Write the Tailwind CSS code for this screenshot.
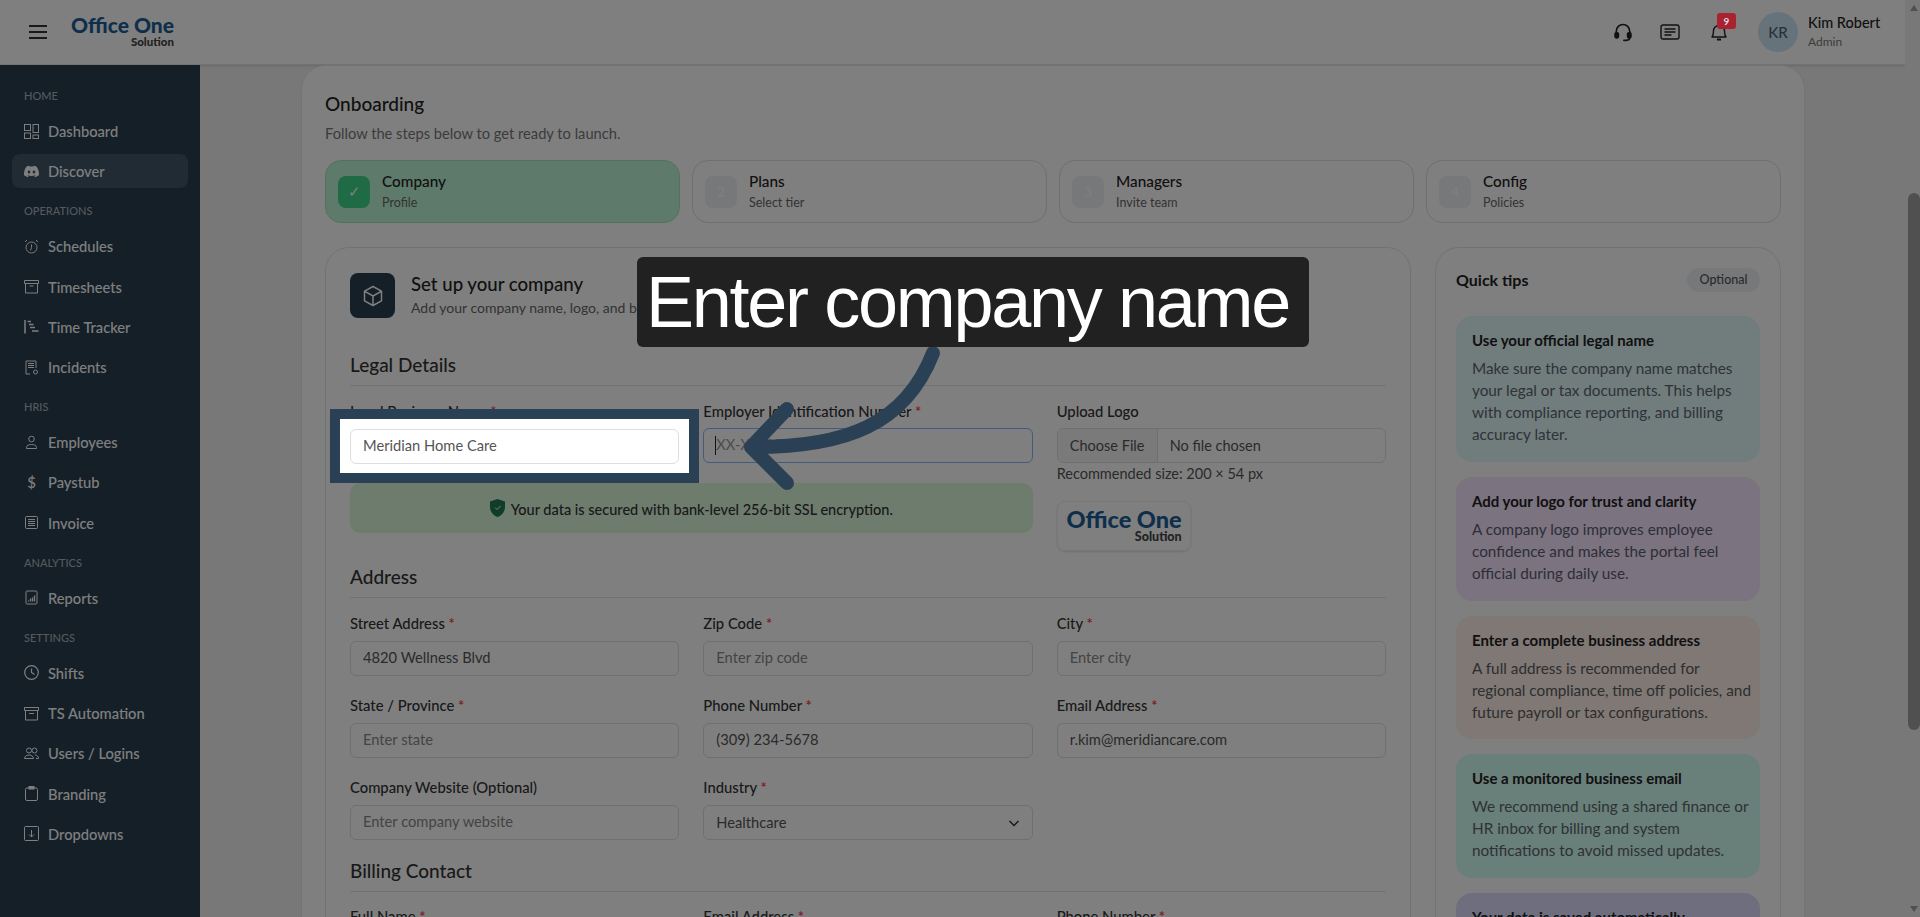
<!DOCTYPE html>
<html lang="en">
<head>
    <meta charset="UTF-8">
    <title>Onboarding - Office One</title>
    <script src="https://cdn.jsdelivr.net/npm/@tailwindcss/browser@4"></script>
</head>
<body class="h-screen overflow-hidden bg-[#f0f0f0] font-['Lato',sans-serif] text-[#333]">
<div class="flex h-screen">
    <div class="flex flex-col w-[1905px]">
        <!-- top bar -->
        <header class="h-[65px] shrink-0 bg-white border-b border-[#e4e4e4] shadow-sm flex items-center">
            <button class="ml-[29px] w-[18px] flex flex-col gap-[4.5px]">
                <span class="h-[1.5px] bg-[#333]"></span>
                <span class="h-[1.5px] bg-[#333]"></span>
                <span class="h-[1.5px] bg-[#333]"></span>
            </button>
            <div class="ml-[23px] w-[104px] mb-[3px] flex flex-col items-end leading-none">
                <span class="text-[21px] font-black text-[#1a5f96] leading-[21px] whitespace-nowrap">Office One</span>
                <span class="mt-[2px] text-[11.500px] font-black text-[#444] leading-[10px]">Solution</span>
            </div>
            <div class="ml-auto flex items-center">
                <svg class="w-[20px] h-[20px] mr-[27px]" viewBox="0 0 24 24" fill="none" stroke="#222" stroke-width="2"><path d="M4 14v-3a8 8 0 0 1 16 0v3"/><rect x="2.5" y="13" width="4" height="6" rx="1.5" fill="#222"/><rect x="17.5" y="13" width="4" height="6" rx="1.5" fill="#222"/><path d="M20 19c0 2-2 3-4 3h-3" stroke-linecap="round"/></svg>
                <svg class="w-[20px] h-[17px] mr-[30px]" viewBox="0 0 20 17" fill="none" stroke="#222" stroke-width="1.4"><rect x="1" y="1" width="18" height="14" rx="2"/><path d="M4.5 5h11M4.5 8h11M4.5 11h7"/></svg>
                <div class="relative w-[18px] h-[20px] mr-[30px]">
                    <svg class="w-[18px] h-[20px]" viewBox="0 0 18 20" fill="none" stroke="#222" stroke-width="1.4"><path d="M2 15c1.2-1.4 1.5-2.4 1.5-6a5.500 5.500 0 0 1 11 0c0 3.600.3 4.600 1.500 6z" stroke-linejoin="round"/><path d="M7 17.500h4" stroke-width="2"/></svg>
                    <span class="absolute z-50 left-[7px] top-[-9px] w-[19px] h-[16px] rounded-[3px] bg-[#a8222f] text-[10px] font-bold leading-[16px] text-center text-[#ddd]">9</span>
                </div>
                <div class="w-[40px] h-[40px] rounded-full bg-[#cfe6f7] flex items-center justify-center text-[15px] font-medium text-[#4a6478]">KR</div>
                <div class="ml-[10px] mr-[25px] w-[72px]">
                    <div class="text-[14.5px] font-medium leading-[18px] text-[#222] whitespace-nowrap">Kim Robert</div>
                    <div class="text-[12px] leading-[16px] text-[#777] mt-[2px]">Admin</div>
                </div>
            </div>
        </header>

        <div class="flex flex-1 min-h-0">
            <!-- sidebar -->
            <aside class="w-[200px] shrink-0 bg-[#283e50] pt-[8px] px-[12px] text-white text-[14.700px] font-medium">
                <div class="h-4 mt-[15px] mb-[10px] pl-[12px] text-[11px] leading-4 text-[#a8b2ba]">HOME</div>
                <a class="h-[34.200px] mb-[6px] flex items-center gap-[9px] pl-[12px]"><svg class="w-[15px] h-[15px]" viewBox="0 0 15 15" fill="none" stroke="currentColor"><rect x=".5" y=".5" width="6" height="6"/><rect x="9" y=".5" width="5.500" height="8"/><rect x=".5" y="9" width="6" height="5.500"/><rect x="9" y="11" width="5.500" height="3.500"/></svg>Dashboard</a>
                <a class="h-[34.200px] mb-[6px] flex items-center gap-[9px] pl-[12px] rounded-lg bg-[#405666]"><svg class="w-[15px] h-[15px]" viewBox="0 0 16 16" fill="currentColor"><path d="M13.545 2.907a13.2 13.2 0 0 0-3.257-1.011.05.05 0 0 0-.052.025c-.141.25-.297.577-.406.833a12.2 12.2 0 0 0-3.658 0 8 8 0 0 0-.412-.833.05.05 0 0 0-.052-.025c-1.125.194-2.22.534-3.257 1.011a.04.04 0 0 0-.021.018C.356 6.024-.213 9.047.066 12.032q.003.022.021.037a13.3 13.3 0 0 0 3.995 2.02.05.05 0 0 0 .056-.019q.463-.63.818-1.329a.05.05 0 0 0-.01-.059l-.018-.011a9 9 0 0 1-1.248-.595.05.05 0 0 1-.02-.066l.015-.019q.127-.095.248-.195a.05.05 0 0 1 .051-.007c2.619 1.196 5.454 1.196 8.041 0a.05.05 0 0 1 .053.007q.121.1.248.195a.05.05 0 0 1-.004.085 8 8 0 0 1-1.249.594.05.05 0 0 0-.03.03.05.05 0 0 0 .003.041c.24.465.515.909.817 1.329a.05.05 0 0 0 .056.019 13.2 13.2 0 0 0 4.001-2.02.05.05 0 0 0 .021-.037c.334-3.451-.559-6.449-2.366-9.106a.03.03 0 0 0-.02-.019m-8.198 7.307c-.789 0-1.438-.724-1.438-1.612s.637-1.613 1.438-1.613c.807 0 1.45.73 1.438 1.613 0 .888-.637 1.612-1.438 1.612m5.316 0c-.788 0-1.438-.724-1.438-1.612s.637-1.613 1.438-1.613c.807 0 1.451.73 1.438 1.613 0 .888-.631 1.612-1.438 1.612"/></svg>Discover</a>
                <div class="h-4 mt-[15px] mb-[10px] pl-[12px] text-[11px] leading-4 text-[#a8b2ba]">OPERATIONS</div>
                <a class="h-[34.200px] mb-[6px] flex items-center gap-[9px] pl-[12px]"><svg class="w-[15px] h-[15px]" viewBox="0 0 15 15" fill="none" stroke="currentColor"><circle cx="7.500" cy="8.500" r="5.500"/><path d="M7.500 5.500v3l-1 3M1 3l2-2M14 3l-2-2"/></svg>Schedules</a>
                <a class="h-[34.200px] mb-[6px] flex items-center gap-[9px] pl-[12px]"><svg class="w-[15px] h-[15px]" viewBox="0 0 15 15" fill="none" stroke="currentColor"><path d="M.5 1.500h14v3h-14zM1.500 4.500v9.500h12V4.500M5.500 7h4"/></svg>Timesheets</a>
                <a class="h-[34.200px] mb-[6px] flex items-center gap-[9px] pl-[12px]"><svg class="w-[15px] h-[15px]" viewBox="0 0 15 15" fill="none" stroke="currentColor"><path d="M1 1v13.500M3.500 2.500H7M5 5.500h4.500M6 8.500h5M8 12h6.500" stroke-width="1.500"/></svg>Time Tracker</a>
                <a class="h-[34.200px] mb-[6px] flex items-center gap-[9px] pl-[12px]"><svg class="w-[15px] h-[15px]" viewBox="0 0 15 15" fill="none" stroke="currentColor"><path d="M2 14V1h10v7M2 14h4M4 3.500h6M4 5.500h6M4 7.500h6" /><circle cx="11.500" cy="12" r="2"/></svg>Incidents</a>
                <div class="h-4 mt-[15px] mb-[10px] pl-[12px] text-[11px] leading-4 text-[#a8b2ba]">HRIS</div>
                <a class="h-[34.200px] mb-[6px] flex items-center gap-[9px] pl-[12px]"><svg class="w-[15px] h-[15px]" viewBox="0 0 15 15" fill="none" stroke="currentColor"><circle cx="7.500" cy="4" r="2.800"/><path d="M2.500 13.500v-1c0-2 2-3 5-3s5 1 5 3v1z"/></svg>Employees</a>
                <a class="h-[34.200px] mb-[6px] flex items-center gap-[9px] pl-[12px]"><span class="w-[15px] text-center text-[15px]">$</span>Paystub</a>
                <a class="h-[34.200px] mb-[6px] flex items-center gap-[9px] pl-[12px]"><svg class="w-[15px] h-[15px]" viewBox="0 0 15 15" fill="none" stroke="currentColor"><rect x="1.500" y="1.500" width="12" height="12" rx="1"/><path d="M4 4.500h7M4 6.500h7M4 8.500h7M4 10.500h7"/></svg>Invoice</a>
                <div class="h-4 mt-[15px] mb-[10px] pl-[12px] text-[11px] leading-4 text-[#a8b2ba]">ANALYTICS</div>
                <a class="h-[34.200px] mb-[6px] flex items-center gap-[9px] pl-[12px]"><svg class="w-[15px] h-[15px]" viewBox="0 0 15 15" fill="none" stroke="currentColor"><rect x="2" y="1" width="11" height="13" rx="1"/><path d="M4.500 11.500v-1M6.500 11.500v-3M8.500 11.500v-4M10.500 11.500v-6" stroke-width="1.300"/></svg>Reports</a>
                <div class="h-4 mt-[15px] mb-[10px] pl-[12px] text-[11px] leading-4 text-[#a8b2ba]">SETTINGS</div>
                <a class="h-[34.200px] mb-[6px] flex items-center gap-[9px] pl-[12px]"><svg class="w-[15px] h-[15px]" viewBox="0 0 15 15" fill="none" stroke="currentColor" stroke-width="1.200"><circle cx="7.500" cy="7.500" r="6.800"/><path d="M7.500 3.500v4l3 2"/></svg>Shifts</a>
                <a class="h-[34.200px] mb-[6px] flex items-center gap-[9px] pl-[12px]"><svg class="w-[15px] h-[15px]" viewBox="0 0 15 15" fill="none" stroke="currentColor"><path d="M.5 1.500h14v3h-14zM1.500 4.500v9.500h12V4.500M5 7.500h5"/></svg>TS Automation</a>
                <a class="h-[34.200px] mb-[6px] flex items-center gap-[9px] pl-[12px]"><svg class="w-[15px] h-[15px]" viewBox="0 0 15 15" fill="none" stroke="currentColor"><circle cx="5" cy="4.500" r="2.500"/><circle cx="10.500" cy="4.500" r="2.500"/><path d="M.5 12.500c0-2 2-3.500 4.500-3.500s4.500 1.500 4.500 3.500zM11 9c2 0 3.500 1.500 3.500 3.500H12"/></svg>Users / Logins</a>
                <a class="h-[34.200px] mb-[6px] flex items-center gap-[9px] pl-[12px]"><svg class="w-[15px] h-[15px]" viewBox="0 0 15 15" fill="none" stroke="currentColor"><rect x="1.500" y="2" width="12" height="12.500" rx="1.500"/><rect x="5" y=".5" width="5" height="2.500" fill="currentColor"/></svg>Branding</a>
                <a class="h-[34.200px] mb-[6px] flex items-center gap-[9px] pl-[12px]"><svg class="w-[15px] h-[15px]" viewBox="0 0 15 15" fill="none" stroke="currentColor"><rect x=".5" y=".5" width="14" height="14" rx="1"/><path d="M7.500 4v7M5 8.500l2.500 2.500L10 8.500"/></svg>Dropdowns</a>
            </aside>

            <!-- content -->
            <main class="flex-1 min-w-0 overflow-hidden pl-[101px]">
                <div class="w-[1504px] bg-white rounded-t-[24px] border border-[#e8e8e8] px-[23px] pt-[25px]">
                    <h1 class="text-[19px] font-medium leading-[26px] text-[#222]">Onboarding</h1>
                    <p class="mt-[6px] text-[14.700px] leading-[20px] text-[#777]">Follow the steps below to get ready to launch.</p>
                    <div class="mt-[17px] grid grid-cols-4 gap-x-[12px]">
                        <div class="h-[63px] rounded-[16px] border border-[#a9e3bf] bg-[#bdf4d6] flex items-center gap-[12px] pl-[12px]">
                            <span class="w-[32px] h-[32px] rounded-[8px] bg-[#3fd68a] flex items-center justify-center text-[15px] text-white">✓</span>
                            <div class="pt-[.5px]"><div class="text-[15.300px] font-medium leading-[18px] text-[#222]">Company</div><div class="mt-[5px] text-[12.500px] leading-[16px] text-[#666]">Profile</div></div>
                        </div>
                        <div class="h-[63px] rounded-[16px] border border-[#dedede] flex items-center gap-[12px] pl-[12px]">
                            <span class="w-[32px] h-[32px] rounded-[8px] bg-[#eef1f5] flex items-center justify-center text-[14px] text-white">2</span>
                            <div class="pt-[.5px]"><div class="text-[15.300px] font-medium leading-[18px] text-[#222]">Plans</div><div class="mt-[5px] text-[12.500px] leading-[16px] text-[#666]">Select tier</div></div>
                        </div>
                        <div class="h-[63px] rounded-[16px] border border-[#dedede] flex items-center gap-[12px] pl-[12px]">
                            <span class="w-[32px] h-[32px] rounded-[8px] bg-[#eef1f5] flex items-center justify-center text-[14px] text-white">3</span>
                            <div class="pt-[.5px]"><div class="text-[15.300px] font-medium leading-[18px] text-[#222]">Managers</div><div class="mt-[5px] text-[12.500px] leading-[16px] text-[#666]">Invite team</div></div>
                        </div>
                        <div class="h-[63px] rounded-[16px] border border-[#dedede] flex items-center gap-[12px] pl-[12px]">
                            <span class="w-[32px] h-[32px] rounded-[8px] bg-[#eef1f5] flex items-center justify-center text-[14px] text-white">4</span>
                            <div class="pt-[.5px]"><div class="text-[15.300px] font-medium leading-[18px] text-[#222]">Config</div><div class="mt-[5px] text-[12.500px] leading-[16px] text-[#666]">Policies</div></div>
                        </div>
                    </div>

                    <div class="mt-[24px] grid grid-cols-[1086px_346px] gap-x-[24px] items-start">
                        <!-- company form -->
                        <section class="rounded-t-[24px] border border-[#e4e4e4] px-[24px] pt-[25px]">
                            <div class="flex items-center gap-[16px] h-[45px]">
                                <span class="w-[45px] h-[45px] rounded-[8px] bg-[#283e50] flex items-center justify-center">
                                    <svg class="w-[24px] h-[24px]" viewBox="0 0 24 24" fill="none" stroke="#fff" stroke-width="1.500" stroke-linejoin="round"><path d="M12 2.500l8.500 4.700v9.600L12 21.500l-8.500-4.700V7.200zM3.500 7.200L12 12l8.500-4.800M12 12v9.500"/></svg>
                                </span>
                                <div class="mb-[1px]">
                                    <div class="text-[18.600px] font-medium leading-[24px] text-[#222]">Set up your company</div>
                                    <div class="mt-[2px] text-[14px] leading-[20px] text-[#666]">Add your company name, logo, and business details. You can update this later anytime.</div>
                                </div>
                            </div>

                            <h2 class="mt-[35px] h-[33px] pb-[9px] border-b border-[#e4e4e4] text-[19px] font-medium leading-[24px] text-[#333]">Legal Details</h2>
                            <div class="mt-[15px] grid grid-cols-3 gap-x-[24px]">
                                <div class="col-span-2">
                                    <div class="grid grid-cols-2 gap-x-[24px]">
                                        <div>
                                            <label class="block h-5 mb-[7px] text-[14.800px] font-medium leading-5">Legal Business Name <span class="text-[#ff2a3c]">*</span></label>
                                            <div class="h-[35px]"></div>
                                        </div>
                                        <div class="relative">
                                            <label class="block h-5 mb-[7px] text-[14.800px] font-medium leading-5">Employer Identification Number <span class="text-[#ff2a3c]">*</span></label>
                                            <input class="block w-full h-[35px] rounded-[6px] border border-[#86b7fe] px-[12px] pb-[4px] text-[14.700px] placeholder:text-[#999]" placeholder="XX-XXXXXXX">
                                            <span class="absolute left-[12px] top-[35px] w-px h-[19px] bg-[#222]"></span>
                                        </div>
                                    </div>
                                    <div class="mt-[20px] h-[50px] rounded-[10px] bg-[#dcf8dc] pt-[4px] flex items-center justify-center gap-[6px] text-[14.500px] font-medium text-[#333]">
                                        <svg class="w-[15px] h-[18px] mb-[4px]" viewBox="0 0 15 18"><path d="M7.500 0L15 2.500V8c0 5-3.500 8.500-7.500 10C3.500 16.500 0 13 0 8V2.500z" fill="#1f7a55"/><path d="M5 8.500l2 2 3.500-3.500" fill="none" stroke="#fff"/></svg>
                                        <span>Your data is secured with bank-level 256-bit SSL encryption.</span>
                                    </div>
                                </div>
                                <div>
                                    <label class="block h-5 mb-[7px] text-[14.800px] font-medium leading-5">Upload Logo</label>
                                    <div class="h-[35px] rounded-[6px] border border-[#dedede] flex items-center text-[14.500px] text-[#555]">
                                        <span class="w-[100px] h-full bg-[#f4f4f4] rounded-l-[6px] border-r border-[#dedede] flex items-center justify-center">Choose File</span>
                                        <span class="ml-[12px]">No file chosen</span>
                                    </div>
                                    <p class="mt-[1px] text-[14.500px] leading-[20px] text-[#555]">Recommended size: 200 × 54 px</p>
                                    <div class="mt-[17px] w-[134px] h-[50px] rounded-[8px] border border-[#eee] shadow-sm flex flex-col items-end justify-center pr-[8px] pb-[3px] leading-none">
                                        <span class="text-[23.500px] font-black text-[#1a5f96] leading-[24px] whitespace-nowrap">Office One</span>
                                        <span class="text-[12.500px] font-black text-[#444] leading-[11px]">Solution</span>
                                    </div>
                                </div>
                            </div>

                            <h2 class="mt-[14px] h-[33px] pb-[9px] border-b border-[#e4e4e4] text-[19px] font-medium leading-[24px] text-[#333]">Address</h2>
                            <div class="mt-[15px] grid grid-cols-3 gap-x-[24px] gap-y-[19px]">
                                <div><label class="block h-5 mb-2 text-[14.800px] font-medium leading-5">Street Address <span class="text-[#ff2a3c]">*</span></label><input class="block w-full h-[35px] rounded-[6px] border border-[#dedede] px-[12px] pb-[4px] text-[14.700px] text-[#555]" value="4820 Wellness Blvd"></div>
                                <div><label class="block h-5 mb-2 text-[14.800px] font-medium leading-5">Zip Code <span class="text-[#ff2a3c]">*</span></label><input class="block w-full h-[35px] rounded-[6px] border border-[#dedede] px-[12px] pb-[4px] text-[14.700px] placeholder:text-[#888]" placeholder="Enter zip code"></div>
                                <div><label class="block h-5 mb-2 text-[14.800px] font-medium leading-5">City <span class="text-[#ff2a3c]">*</span></label><input class="block w-full h-[35px] rounded-[6px] border border-[#dedede] px-[12px] pb-[4px] text-[14.700px] placeholder:text-[#888]" placeholder="Enter city"></div>
                                <div><label class="block h-5 mb-2 text-[14.800px] font-medium leading-5">State / Province <span class="text-[#ff2a3c]">*</span></label><input class="block w-full h-[35px] rounded-[6px] border border-[#dedede] px-[12px] pb-[4px] text-[14.700px] placeholder:text-[#888]" placeholder="Enter state"></div>
                                <div><label class="block h-5 mb-2 text-[14.800px] font-medium leading-5">Phone Number <span class="text-[#ff2a3c]">*</span></label><input class="block w-full h-[35px] rounded-[6px] border border-[#dedede] px-[12px] pb-[4px] text-[14.700px] text-[#555]" value="(309) 234-5678"></div>
                                <div><label class="block h-5 mb-2 text-[14.800px] font-medium leading-5">Email Address <span class="text-[#ff2a3c]">*</span></label><input class="block w-full h-[35px] rounded-[6px] border border-[#dedede] px-[12px] pb-[4px] text-[14.700px] text-[#555]" value="r.kim@meridiancare.com"></div>
                                <div><label class="block h-5 mb-2 text-[14.800px] font-medium leading-5">Company Website (Optional)</label><input class="block w-full h-[35px] rounded-[6px] border border-[#dedede] px-[12px] pb-[4px] text-[14.700px] placeholder:text-[#888]" placeholder="Enter company website"></div>
                                <div><label class="block h-5 mb-2 text-[14.800px] font-medium leading-5">Industry <span class="text-[#ff2a3c]">*</span></label>
                                    <div class="h-[35px] rounded-[6px] border border-[#dedede] px-[12px] flex items-center justify-between text-[14.700px] text-[#555]">Healthcare
                                        <svg class="w-[12px] h-[12px]" viewBox="0 0 12 12" fill="none" stroke="#333" stroke-width="1.500"><path d="M1.500 4l4.500 4.500L10.500 4"/></svg>
                                    </div>
                                </div>
                            </div>

                            <h2 class="mt-[19px] h-[33px] pb-[9px] border-b border-[#e4e4e4] text-[19px] font-medium leading-[24px] text-[#333]">Billing Contact</h2>
                            <div class="mt-[14px] grid grid-cols-3 gap-x-[24px]">
                                <label class="block h-5 text-[14.800px] font-medium leading-5">Full Name <span class="text-[#ff2a3c]">*</span></label>
                                <label class="block h-5 text-[14.800px] font-medium leading-5">Email Address <span class="text-[#ff2a3c]">*</span></label>
                                <label class="block h-5 text-[14.800px] font-medium leading-5">Phone Number <span class="text-[#ff2a3c]">*</span></label>
                            </div>
                        </section>

                        <!-- tips -->
                        <aside class="rounded-t-[24px] border border-[#e4e4e4] px-[20px] pt-[20px]">
                            <div class="flex items-center justify-between h-[24px]">
                                <h3 class="text-[16px] font-bold text-[#222]">Quick tips</h3>
                                <span class="w-[73px] h-[24px] rounded-full bg-[#eef0f3] text-center text-[12.500px] font-medium leading-[24px] text-[#555]">Optional</span>
                            </div>
                            <div class="mt-[24px] flex flex-col gap-[15px]">
                                <div class="h-[146px] rounded-[16px] bg-[#e2fafa] px-[16px] pt-[13px]">
                                    <div class="text-[15px] font-bold leading-[22px] text-[#222]">Use your official legal name</div>
                                    <p class="mt-[6px] text-[15.300px] leading-[22px] text-[#5c6670] whitespace-nowrap">Make sure the company name matches<br>your legal or tax documents. This helps<br>with compliance reporting, and billing<br>accuracy later.</p>
                                </div>
                                <div class="h-[124px] rounded-[16px] bg-[#f6e6ff] px-[16px] pt-[13px]">
                                    <div class="text-[15px] font-bold leading-[22px] text-[#222]">Add your logo for trust and clarity</div>
                                    <p class="mt-[6px] text-[15.300px] leading-[22px] text-[#5c5c70] whitespace-nowrap">A company logo improves employee<br>confidence and makes the portal feel<br>official during daily use.</p>
                                </div>
                                <div class="h-[123px] rounded-[16px] bg-[#fff0ea] px-[16px] pt-[13px]">
                                    <div class="text-[15px] font-bold leading-[22px] text-[#222]">Enter a complete business address</div>
                                    <p class="mt-[6px] text-[15.300px] leading-[22px] text-[#5c5c5c] whitespace-nowrap">A full address is recommended for<br>regional compliance, time off policies, and<br>future payroll or tax configurations.</p>
                                </div>
                                <div class="h-[124px] rounded-[16px] bg-[#d2fef4] px-[16px] pt-[13px]">
                                    <div class="text-[15px] font-bold leading-[22px] text-[#222]">Use a monitored business email</div>
                                    <p class="mt-[6px] text-[15.300px] leading-[22px] text-[#5c6668] whitespace-nowrap">We recommend using a shared finance or<br>HR inbox for billing and system<br>notifications to avoid missed updates.</p>
                                </div>
                                <div class="h-[124px] rounded-[16px] bg-[#dcdcff] px-[16px] pt-[13px]">
                                    <div class="text-[15px] font-bold leading-[22px] text-[#222]">Your data is saved automatically</div>
                                </div>
                            </div>
                        </aside>
                    </div>
                </div>
            </main>
        </div>
    </div>

    <!-- page scrollbar -->
    <div class="w-[15px] shrink-0 bg-[#f1f1f1] flex flex-col items-end relative">
        <span class="mt-[5px] mr-[2px] w-0 h-0 border-x-[4px] border-x-transparent border-b-[6px] border-b-[#a0a0a0]"></span>
        <span class="mt-[182px] w-[12px] h-[537px] rounded-[6px] bg-[#a0a0a0]"></span>
        <span class="mt-auto mb-[5px] mr-[2px] w-0 h-0 border-x-[4px] border-x-transparent border-t-[6px] border-t-[#a0a0a0]"></span>
    </div>
</div>

<!-- walkthrough overlay -->
<div class="fixed inset-0 z-40 bg-black/50"></div>
<div class="fixed z-50 left-[330px] top-[409px] w-[369px] h-[74px] border-[10px] border-[#2a4055] bg-white pl-[10px] pr-[10px] pt-[10px]">
    <input class="block w-[329px] h-[35px] rounded-[6px] border border-[#dedede] px-[12px] pb-[4px] text-[14.700px] text-[#555]" value="Meridian Home Care">
</div>
<svg class="fixed z-50 left-0 top-0 w-[1920px] h-[917px] pointer-events-none" viewBox="0 0 1920 917" fill="none" stroke="#2a4055" stroke-width="14" stroke-linecap="round" stroke-linejoin="round">
    <path d="M933 353C905 425 845 447 754 447"/>
    <path d="M787 409L751 447L787 483"/>
</svg>
<div class="fixed z-50 left-[637px] top-[257px] w-[672px] h-[90px] pr-[11px] rounded-[6px] bg-[#212121] flex items-center justify-center font-['Liberation_Sans',sans-serif] text-[72px] tracking-[-2.300px] leading-none text-white whitespace-nowrap">Enter company name</div>
</body>
</html>
